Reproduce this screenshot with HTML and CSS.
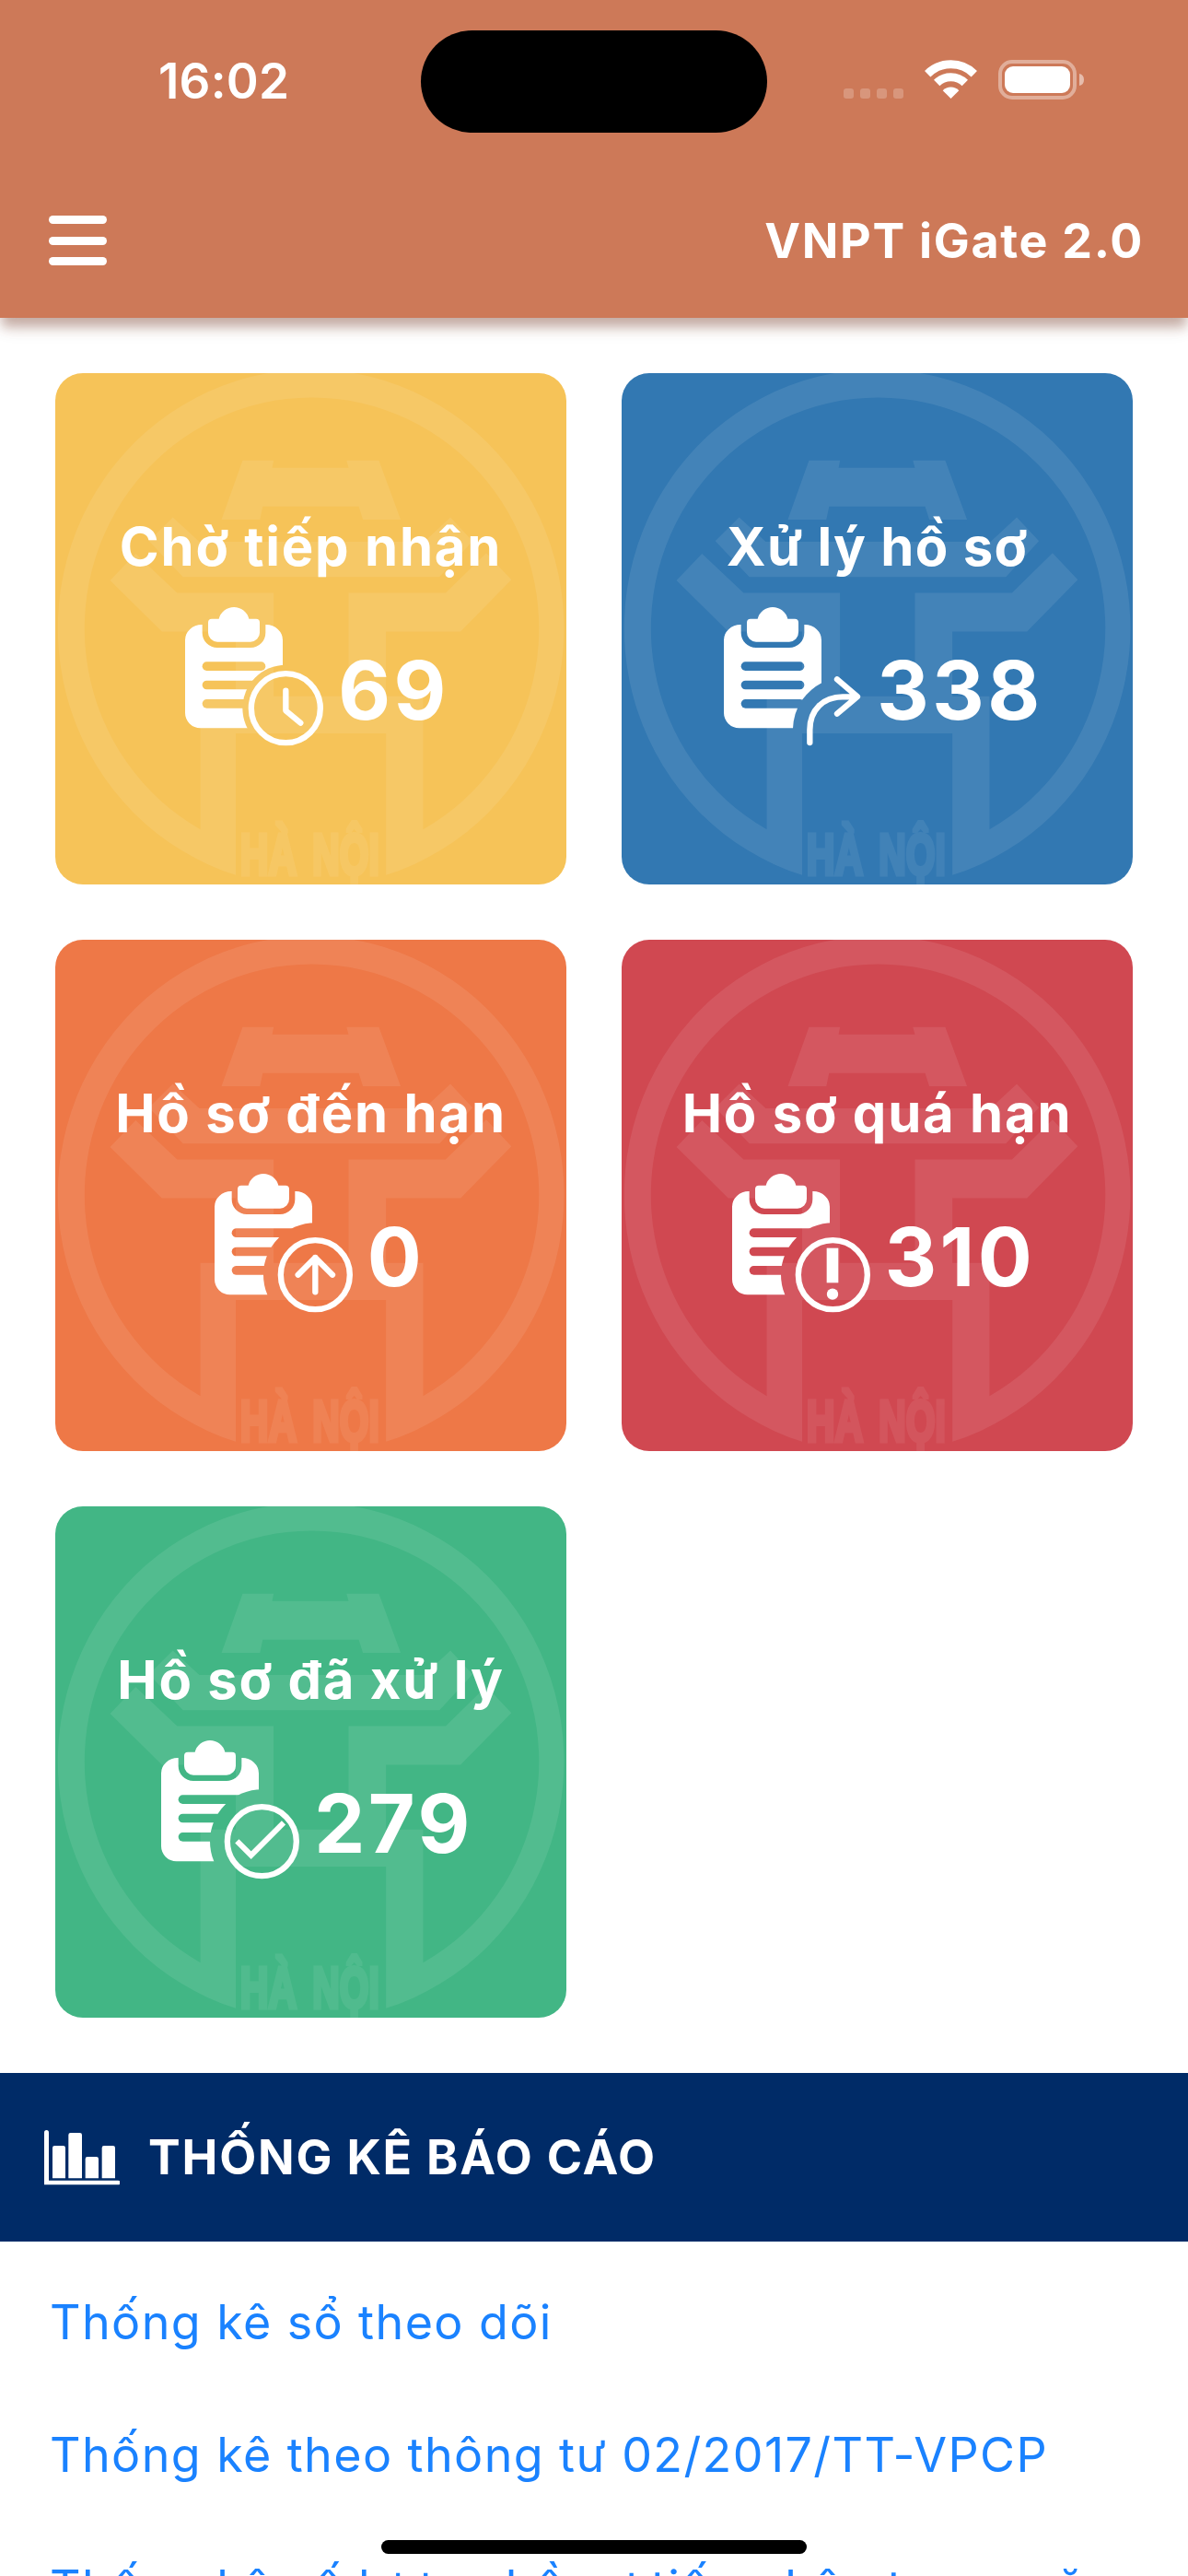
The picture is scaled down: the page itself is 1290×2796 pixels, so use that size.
FILE: index.html
```html
<!DOCTYPE html>
<html lang="vi">
<head>
<meta charset="utf-8">
<title>VNPT iGate 2.0</title>
<link rel="stylesheet" href="styles.css">
</head>
<body>
<svg class="defs" width="0" height="0" aria-hidden="true">
  <defs>
    <g id="slots" fill="#000">
      <rect x="119" y="233" width="206" height="29" rx="14.5"/>
      <rect x="119" y="294" width="206" height="29" rx="14.5"/>
      <rect x="119" y="355" width="206" height="29" rx="14.5"/>
    </g>
    <mask id="cut-clock" maskUnits="userSpaceOnUse" x="60" y="50" width="460" height="460">
      <rect x="60" y="50" width="460" height="460" fill="#fff"/><use href="#slots"/><circle cx="391" cy="384" r="141"/>
    </mask>
    <mask id="cut-round" maskUnits="userSpaceOnUse" x="60" y="50" width="460" height="460">
      <rect x="60" y="50" width="460" height="460" fill="#fff"/><use href="#slots"/><circle cx="391" cy="384" r="169"/>
    </mask>
    <mask id="cut-forward" maskUnits="userSpaceOnUse" x="60" y="50" width="460" height="460">
      <rect x="60" y="50" width="460" height="460" fill="#fff"/><use href="#slots"/>
      <path d="M383 301Q346 320 319 356Q290 396 288 450V510H520V301Z"/>
    </mask>
    <path id="board-body" d="M119 112H117A54 50 0 0 0 63 162V399A50 50 0 0 0 113 449H331A50 50 0 0 0 381 399V162A54 50 0 0 0 327 112H325V138A49 49 0 0 1 276 187H168A49 49 0 0 1 119 138Z"/>
    <path id="board-clip" d="M173 93A50.5 50.5 0 0 1 271 93H294A12 12 0 0 1 306 105V137A30 30 0 0 1 276 168H168A30 30 0 0 1 138 137V105A12 12 0 0 1 150 93Z"/>
    <symbol id="seal" viewBox="27 27 1500.4 1500.4">
      <g fill="#fff" fill-opacity=".088">
        <path d="M557 1500A743 759 0 1 1 998 1500V1084H557ZM453 1366V975H557V785H340L188 635L263 557L385 672H668V975H888V672H1173L1292 555L1366 633L1217 785H998V975H1107V1366A667 677 0 1 0 453 1366Z" fill-rule="evenodd"/>
        <path d="M577 283H668L664 305H888L882 283H977L1041 457H930L918 418H636L628 457H515Z"/>
        <path d="M372 450L450 522H1110L1187 450L1252 520L1155 625H402L302 520Z"/>
      </g>
      <g class="seal-text">
        <text x="570" y="1499" textLength="166" lengthAdjust="spacingAndGlyphs">HÀ</text>
        <text x="782" y="1499" textLength="196" lengthAdjust="spacingAndGlyphs">NỘI</text>
      </g>
    </symbol>
  </defs>
</svg>

<header class="top">
  <div class="status">
    <span class="time">16:02</span>
    <span class="island"></span>
    <svg class="indicators" viewBox="0 0 270 50" width="270" height="50">
      <g fill="#fff" fill-opacity=".22">
        <rect x="6" y="36" width="11" height="11" rx="3"/><rect x="24" y="36" width="11" height="11" rx="3"/>
        <rect x="42" y="36" width="11" height="11" rx="3"/><rect x="60" y="36" width="11" height="11" rx="3"/>
      </g>
      <g fill="none" stroke="#fff" stroke-width="9">
        <path d="M97.2 20.2A36 36 0 0 1 147.8 20.2"/>
        <path d="M107.2 30A21.6 21.6 0 0 1 137.8 30"/>
      </g>
      <path d="M122.5 47L113.7 38.2A12.5 12.5 0 0 1 131.3 38.2Z" fill="#fff"/>
      <rect x="176" y="7" width="81" height="39" rx="13" fill="none" stroke="#fff" stroke-opacity=".4" stroke-width="4"/>
      <rect x="181" y="12" width="71" height="29" rx="9" fill="#fff"/>
      <path d="M262 20Q267 21 267 26.5T262 33Z" fill="#fff" fill-opacity=".5"/>
    </svg>
  </div>
  <div class="appbar">
    <div class="menu"><i></i><i></i><i></i></div>
    <h1 class="brand">VNPT iGate 2.0</h1>
  </div>
</header>

<main>
  <section class="cards">
    <article class="card yellow">
      <svg class="seal"><use href="#seal"/></svg>
      <h2>Chờ tiếp nhận</h2>
      <div class="figure">
        <svg class="icon" viewBox="63 55 450 450">
          <g fill="#fff"><use href="#board-body" mask="url(#cut-clock)"/><use href="#board-clip"/></g>
          <circle cx="391" cy="384" r="112.5" class="line"/>
          <path class="line" d="M391 327V392L439 432"/>
        </svg>
        <span class="count">69</span>
      </div>
    </article>
    <article class="card blue">
      <svg class="seal"><use href="#seal"/></svg>
      <h2>Xử lý hồ sơ</h2>
      <div class="figure">
        <svg class="icon" viewBox="63 55 450 450">
          <g fill="#fff"><use href="#board-body" mask="url(#cut-forward)"/><use href="#board-clip"/></g>
          <path class="line" d="M343 496V455C343 388 388 347 450 347H495M432 290L498 346.5L432 402"/>
        </svg>
        <span class="count">338</span>
      </div>
    </article>
    <article class="card orange">
      <svg class="seal"><use href="#seal"/></svg>
      <h2>Hồ sơ đến hạn</h2>
      <div class="figure">
        <svg class="icon" viewBox="63 55 450 450">
          <g fill="#fff"><use href="#board-body" mask="url(#cut-round)"/><use href="#board-clip"/></g>
          <circle cx="391" cy="384" r="112.5" class="line"/>
          <path class="line" d="M391 440V328M335 384L391 328L447 384"/>
        </svg>
        <span class="count">0</span>
      </div>
    </article>
    <article class="card red">
      <svg class="seal"><use href="#seal"/></svg>
      <h2>Hồ sơ quá hạn</h2>
      <div class="figure">
        <svg class="icon" viewBox="63 55 450 450">
          <g fill="#fff"><use href="#board-body" mask="url(#cut-round)"/><use href="#board-clip"/>
            <rect x="371" y="297" width="38" height="113"/><circle cx="390" cy="447" r="18.5"/></g>
          <circle cx="391" cy="384" r="112.5" class="line"/>
        </svg>
        <span class="count">310</span>
      </div>
    </article>
    <article class="card green">
      <svg class="seal"><use href="#seal"/></svg>
      <h2>Hồ sơ đã xử lý</h2>
      <div class="figure">
        <svg class="icon" viewBox="63 55 450 450">
          <g fill="#fff"><use href="#board-body" mask="url(#cut-round)"/><use href="#board-clip"/></g>
          <circle cx="391" cy="384" r="112.5" class="line"/>
          <path class="line tick" d="M310 383L356 429L462 323"/>
        </svg>
        <span class="count">279</span>
      </div>
    </article>
  </section>

  <div class="section-head">
    <svg class="chart" viewBox="0 0 246 180" width="82" height="60" fill="#fff">
      <path d="M0 8A7.5 8 0 0 1 15 8V164H241A7 7 0 0 1 241 178H0Z"/>
      <path d="M27 157V58Q27 51 34 51H62Q69 51 69 58V157ZM79 157V16Q79 9 86 9H116Q123 9 123 16V157ZM134 157V94Q134 87 141 87H170Q177 87 177 94V157ZM188 157V58Q188 51 195 51H224Q231 51 231 58V157Z"/>
    </svg>
    <h2>THỐNG KÊ BÁO CÁO</h2>
  </div>
  <nav class="links">
    <a>Thống kê sổ theo dõi</a>
    <a>Thống kê theo thông tư 02/2017/TT-VPCP</a>
    <a>Thống kê số lượng hồ sơ tiếp nhận trong năm</a>
  </nav>
</main>
<div class="home"></div>
</body>
</html>
```

FILE: styles.css
```css
* { box-sizing: border-box; margin: 0; padding: 0; }
html, body { height: 2796px; overflow: hidden; }
body { position: relative; width: 1290px; background: #fff; font-family: Inter, "Liberation Sans", sans-serif; }
.defs { position: absolute; }

.top { position: relative; height: 345px; background: #cd7958; box-shadow: 0 12px 12px -2px rgba(110, 50, 30, .36), 0 6px 24px rgba(110, 50, 30, .1); }
.status { display: flex; align-items: flex-start; height: 177px; padding-top: 33px; }
.time { width: 285px; margin-left: 172px; padding-top: 20px; color: #fff; font-size: 53px; font-weight: 600; line-height: 70px; letter-spacing: .2px; }
.island { width: 376px; height: 111px; border-radius: 56px; background: #000; }
.indicators { margin: 27px 0 0 77px; }
.appbar { display: flex; align-items: center; justify-content: space-between; height: 168px; padding: 0 48px 0 53px; }
.menu { display: flex; flex-direction: column; gap: 13.5px; }
.menu i { width: 63px; height: 9px; border-radius: 4.5px; background: #fff; }
.brand { padding-top: 2px; color: #fff; font-size: 52px; font-weight: 650; line-height: 70px; letter-spacing: 1.7px; }

.cards { display: grid; grid-template-columns: 555px 555px; gap: 60px; padding: 60px; }
.card { position: relative; height: 555px; padding-top: 147.5px; border-radius: 30px; overflow: hidden; color: #fff; }
.card > * { position: relative; }
.card .seal { position: absolute; top: 0; left: 0; width: 555px; height: 555px; }
.seal-text { opacity: .07; fill: #fff; stroke: #fff; stroke-width: 13px; font: 700 172px "Liberation Sans", sans-serif; }
.yellow { background: #f6c358; }
.blue { background: #3278b2; }
.orange { background: #ee7847; }
.red { background: #d04851; }
.green { background: #42b685; }
.card h2 { font-size: 58px; font-weight: 700; line-height: 80px; letter-spacing: 1.8px; text-align: center; white-space: nowrap; }
.blue h2 { letter-spacing: 1.3px; }
.figure { display: flex; justify-content: center; align-items: flex-end; gap: 16px; height: 150px; margin-top: 26px; padding-left: 14px; }
.orange .figure { padding-left: 19px; }
.icon { width: 150px; height: 150px; overflow: visible; }
.count { font-size: 87.5px; font-weight: 700; line-height: 119px; letter-spacing: 3.5px; }
.line { fill: none; stroke: #fff; stroke-width: 19px; stroke-linecap: round; stroke-linejoin: round; }
.tick { stroke-width: 18px; stroke-linecap: butt; stroke-linejoin: miter; }

.section-head { display: flex; align-items: center; gap: 31px; height: 183px; padding-left: 48px; background: #002b67; color: #fff; }
.section-head h2 { font-size: 52px; font-weight: 650; line-height: 70px; letter-spacing: 1.8px; }
.links { display: flex; flex-direction: column; padding: 16px 0 0 54px; }
.links a { color: #1a82ff; font-size: 52px; font-weight: 430; line-height: 144px; letter-spacing: 1.4px; white-space: nowrap; }
.home { position: absolute; left: 414px; bottom: 24px; width: 462px; height: 15px; border-radius: 8px; background: #000; }
```
